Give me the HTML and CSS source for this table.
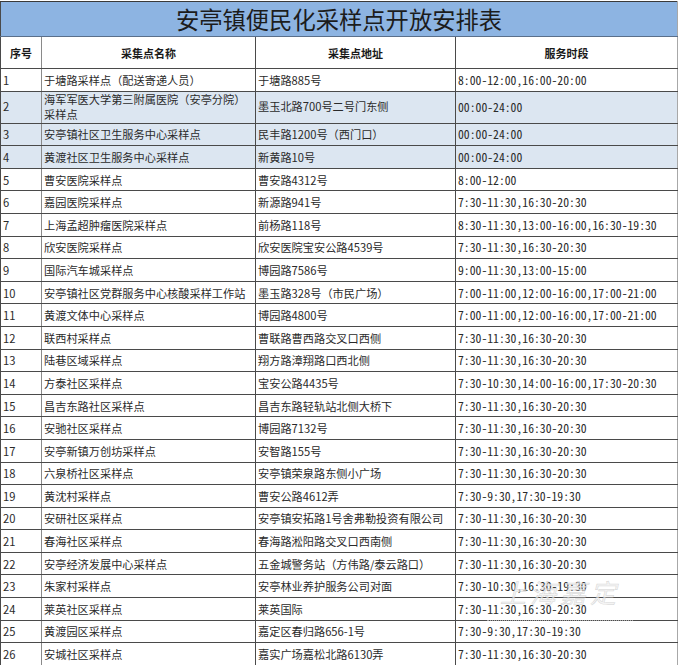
FILE: index.html
```html
<!DOCTYPE html>
<html lang="zh-CN">
<head>
<meta charset="utf-8">
<title>安亭镇便民化采样点开放安排表</title>
<link rel="stylesheet" href="styles.css">
</head>
<body>
<div class="sheet">
<table class="schedule">
  <colgroup>
    <col class="c-no"><col class="c-name"><col class="c-addr"><col class="c-time">
  </colgroup>
  <thead>
    <tr class="title-row"><th colspan="4">安亭镇便民化采样点开放安排表</th></tr>
    <tr class="head-row"><th>序号</th><th>采集点名称</th><th>采集点地址</th><th>服务时段</th></tr>
  </thead>
  <tbody>
    <tr><td>1</td><td>于塘路采样点（配送寄递人员）</td><td>于塘路885号</td><td class="t">8:00-12:00,16:00-20:00</td></tr>
    <tr class="hl tall"><td>2</td><td>海军军医大学第三附属医院（安亭分院）<br>采样点</td><td>墨玉北路700号二号门东侧</td><td class="t">00:00-24:00</td></tr>
    <tr class="hl"><td>3</td><td>安亭镇社区卫生服务中心采样点</td><td>民丰路1200号（西门口）</td><td class="t">00:00-24:00</td></tr>
    <tr class="hl"><td>4</td><td>黄渡社区卫生服务中心采样点</td><td>新黄路10号</td><td class="t">00:00-24:00</td></tr>
    <tr><td>5</td><td>曹安医院采样点</td><td>曹安路4312号</td><td class="t">8:00-12:00</td></tr>
    <tr><td>6</td><td>嘉园医院采样点</td><td>新源路941号</td><td class="t">7:30-11:30,16:30-20:30</td></tr>
    <tr><td>7</td><td>上海孟超肿瘤医院采样点</td><td>前杨路118号</td><td class="t">8:30-11:30,13:00-16:00,16:30-19:30</td></tr>
    <tr><td>8</td><td>欣安医院采样点</td><td>欣安医院宝安公路4539号</td><td class="t">7:30-11:30,16:30-20:30</td></tr>
    <tr><td>9</td><td>国际汽车城采样点</td><td>博园路7586号</td><td class="t">9:00-11:30,13:00-15:00</td></tr>
    <tr><td>10</td><td>安亭镇社区党群服务中心核酸采样工作站</td><td>墨玉路328号（市民广场）</td><td class="t">7:00-11:00,12:00-16:00,17:00-21:00</td></tr>
    <tr><td>11</td><td>黄渡文体中心采样点</td><td>博园路4800号</td><td class="t">7:00-11:00,12:00-16:00,17:00-21:00</td></tr>
    <tr><td>12</td><td>联西村采样点</td><td>曹联路曹西路交叉口西侧</td><td class="t">7:30-11:30,16:30-20:30</td></tr>
    <tr><td>13</td><td>陆巷区域采样点</td><td>翔方路漳翔路口西北侧</td><td class="t">7:30-11:30,16:30-20:30</td></tr>
    <tr><td>14</td><td>方泰社区采样点</td><td>宝安公路4435号</td><td class="t">7:30-10:30,14:00-16:00,17:30-20:30</td></tr>
    <tr><td>15</td><td>昌吉东路社区采样点</td><td>昌吉东路轻轨站北侧大桥下</td><td class="t">7:30-11:30,16:30-20:30</td></tr>
    <tr><td>16</td><td>安驰社区采样点</td><td>博园路7132号</td><td class="t">7:30-11:30,16:30-20:30</td></tr>
    <tr><td>17</td><td>安亭新镇万创坊采样点</td><td>安智路155号</td><td class="t">7:30-11:30,16:30-20:30</td></tr>
    <tr><td>18</td><td>六泉桥社区采样点</td><td>安亭镇荣泉路东侧小广场</td><td class="t">7:30-11:30,16:30-20:30</td></tr>
    <tr><td>19</td><td>黄沈村采样点</td><td>曹安公路4612弄</td><td class="t">7:30-9:30,17:30-19:30</td></tr>
    <tr><td>20</td><td>安研社区采样点</td><td>安亭镇安拓路1号舍弗勒投资有限公司</td><td class="t">7:30-11:30,16:30-20:30</td></tr>
    <tr><td>21</td><td>春海社区采样点</td><td>春海路淞阳路交叉口西南侧</td><td class="t">7:30-11:30,16:30-20:30</td></tr>
    <tr><td>22</td><td>安亭经济发展中心采样点</td><td>五金城警务站（方伟路/泰云路口）</td><td class="t">7:30-11:30,16:30-20:30</td></tr>
    <tr><td>23</td><td>朱家村采样点</td><td>安亭林业养护服务公司对面</td><td class="t">7:30-10:30,16:30-19:30</td></tr>
    <tr class="dark-top"><td>24</td><td>莱英社区采样点</td><td>莱英国际</td><td class="t">7:30-11:30,16:30-20:30</td></tr>
    <tr><td>25</td><td>黄渡园区采样点</td><td>嘉定区春归路656-1号</td><td class="t">7:30-9:30,17:30-19:30</td></tr>
    <tr><td>26</td><td>安城社区采样点</td><td>嘉实广场嘉松北路6130弄</td><td class="t">7:30-11:30,16:30-20:30</td></tr>
  </tbody>
</table>
<div class="watermark"><span class="wm-text">上海嘉定</span></div>
</div>
</body>
</html>
```
FILE: styles.css
```css
html, body {
  margin: 0;
  padding: 0;
  background: #ffffff;
}

.sheet {
  position: relative;
  width: 679px;
  height: 665px;
  overflow: hidden;
  padding-top: 1px;
  box-sizing: border-box;
}

.schedule {
  border-collapse: collapse;
  table-layout: fixed;
  width: 677px;
  font-family: "Noto Sans CJK SC", sans-serif;
  font-size: 11.2px;
  color: #2a2a2a;
}

.c-no { width: 41px; }
.c-name { width: 214px; }
.c-addr { width: 200px; }
.c-time { width: 222px; }

.schedule th,
.schedule td {
  border: 1px solid #4a4a4a;
  padding: 0 2px;
  text-align: left;
  vertical-align: middle;
  overflow: hidden;
  white-space: nowrap;
  line-height: 14px;
}

.schedule td:first-child { border-right-color: #8a8a8a; }
.schedule td:last-child,
.schedule th:last-child { border-right-color: #a8a8a8; }

.title-row th {
  height: 34px;
  background: #8db4e2;
  border-color: #3a3a3a #a8a8a8 #5a6f8a #4a4a4a;
  text-align: center;
  font-weight: 400;
  font-size: 23.3px;
  color: #1c1c1c;
  padding: 0;
}

.head-row th {
  height: 31px;
  background: #ffffff;
  text-align: center;
  font-weight: 700;
  font-size: 11px;
  color: #1a1a1a;
}

.head-row th:first-child { border-right-color: #8a8a8a; }

.schedule tbody tr { height: 22.6px; }
.schedule tbody tr.tall { height: 32px; }
.schedule tbody tr.tall td { line-height: 15.5px; }

.schedule tbody tr.hl td { background: #dce6f1; }

.schedule tbody tr.dark-top td { border-top: 1px solid #111111; }

.schedule td.t {
  font-feature-settings: "hwid" 1;
  font-size: 11.7px;
  color: #2a2a2a;
}

.watermark {
  position: absolute;
  left: 487px;
  top: 568px;
  width: 146px;
  height: 52px;
  border-bottom: 1px dotted rgba(200, 200, 200, 0.7);
  text-align: center;
  pointer-events: none;
}

.wm-text {
  font-family: "Noto Sans CJK SC", sans-serif;
  font-size: 26px;
  font-style: italic;
  letter-spacing: 4px;
  color: rgba(240, 240, 240, 0.7);
  -webkit-text-stroke: 0.5px rgba(175, 175, 175, 0.5);
  line-height: 48px;
}
```
